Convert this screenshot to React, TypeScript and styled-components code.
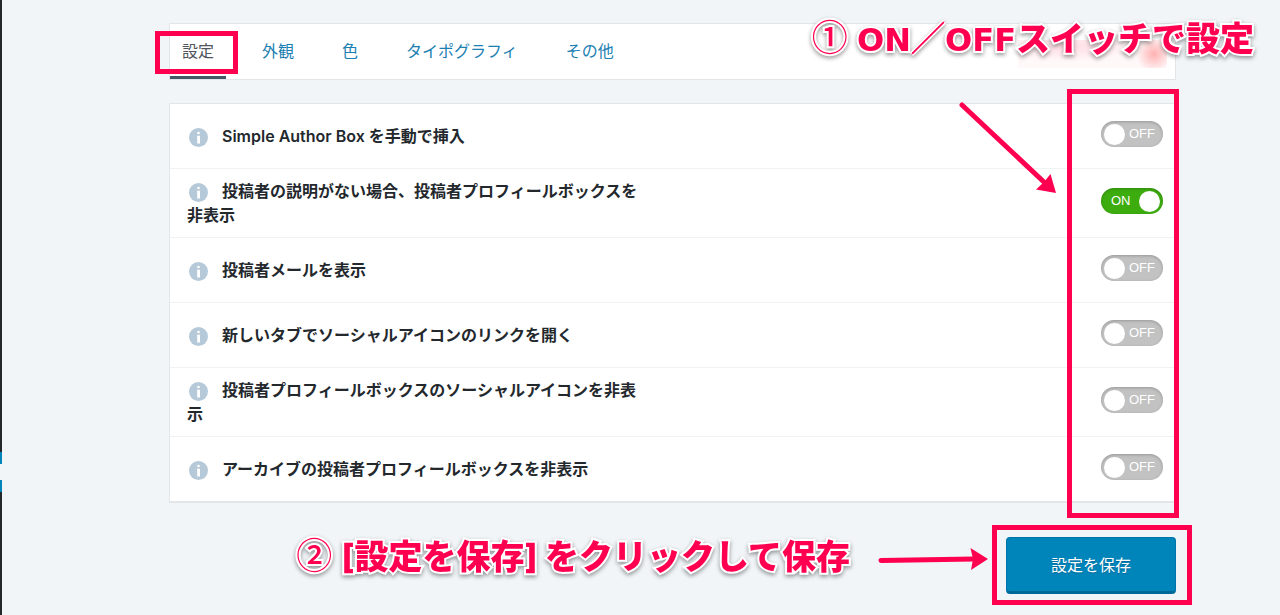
import React, { useState } from "react";
import styled, { createGlobalStyle } from "styled-components";

const PINK = "#ff0050";

const GlobalStyle = createGlobalStyle`
  *, *::before, *::after { box-sizing: border-box; }
  html, body, #root { min-height: 100vh; }
  body {
    margin: 0;
    background: #f1f5f8;
    color: #23282d;
    font: 16px/24px Inter, "Noto Sans CJK JP", sans-serif;
    overflow-x: hidden;
  }
`;

const Page = styled.div`
  display: flex;
  min-height: 100vh;
`;

const Sidebar = styled.aside`
  display: flex;
  flex-direction: column;
  width: 2px;
  background: #23282d;
`;

const SidebarActive = styled.div`
  height: 40px;
  margin-top: 452px;
  background: linear-gradient(#0085ba 12px, #f1f5f8 12px, #f1f5f8 28px, #0085ba 28px);
`;

const Main = styled.main`
  flex: 1;
  min-width: 0;
  padding: 23px 104px 10px 167px;
`;

const TabBar = styled.nav`
  position: relative;
  display: flex;
  gap: 24px;
  height: 57px;
  border: 1px solid #e3e6e8;
  background: #fff;
`;

const Tab = styled.a<{ $active?: boolean }>`
  position: relative;
  display: flex;
  align-items: center;
  padding: 2px 12px 0;
  border-bottom: 3px solid ${(p) => (p.$active ? "#415868" : "transparent")};
  color: ${(p) => (p.$active ? "#50565c" : "#1c80b2")};
  text-decoration: none;
  white-space: nowrap;
`;

const Smudge = styled.div`
  flex: none;
  align-self: center;
  width: 149px;
  height: 28px;
  margin: 4px 8px 0 auto;
  background:
    radial-gradient(circle at 136px 14px, rgba(255, 130, 130, 0.6), rgba(255, 130, 130, 0) 18px),
    radial-gradient(ellipse at 50px 6px, rgba(255, 170, 185, 0.4), rgba(255, 190, 200, 0.1) 70px);
`;

const Frame = styled.div<{ $inset: string }>`
  position: absolute;
  inset: ${(p) => p.$inset};
  border: 5px solid ${PINK};
  pointer-events: none;
`;

const SwitchFrame = styled(Frame)`
  width: 112px;
`;

const Note = styled.p`
  margin: 0;
  color: ${PINK};
  font-family: Inter, "Noto Sans CJK JP", sans-serif;
  font-size: 34px;
  line-height: 36px;
  font-weight: 800;
  white-space: nowrap;
  -webkit-text-stroke: 4px #fff;
  paint-order: stroke fill;
  filter: drop-shadow(0 2px 2px rgba(0, 0, 0, 0.4));
`;

const TopNote = styled(Note)`
  position: absolute;
  right: -79px;
  top: -3px;
`;

const Numeral = styled.span`
  margin-right: 2px;
  font-family: "Noto Sans CJK JP", sans-serif;
  font-size: 36px;
  font-weight: 500;
  line-height: 0;
`;

const Wide = styled.span`
  font-family: "DejaVu Sans", sans-serif;
  font-size: 32px;
  font-weight: 700;
  line-height: 0;
`;

const Slash = styled.span`
  -webkit-text-stroke: 2px ${PINK};
  text-shadow: 2px 0 #fff, -2px 0 #fff, 0 2px #fff, 0 -2px #fff;
`;

const Card = styled.section`
  position: relative;
  margin-top: 23px;
  border: 1px solid #e3e6e8;
  border-bottom-width: 2px;
  background: #fff;
`;

const Row = styled.div`
  display: flex;
  align-items: center;
  justify-content: space-between;
  min-height: 65px;
  padding: 10px 12px 10px 17px;
  border-top: 1px solid #f1f2f3;
  &:first-child {
    min-height: 64px;
    border-top: 0;
  }
`;

const RowLabel = styled.label`
  width: 47%;
  max-width: 462px;
  font-weight: 600;
  line-height: 24px;
`;

const InfoIcon = styled.svg`
  width: 19px;
  height: 19px;
  margin: 0 14px 0 2px;
  vertical-align: -5px;
`;

const Switch = styled.span<{ $on: boolean }>`
  position: relative;
  display: flex;
  flex-direction: ${(p) => (p.$on ? "row" : "row-reverse")};
  align-items: center;
  justify-content: space-between;
  width: 62px;
  height: 26px;
  margin-bottom: 4px;
  padding: ${(p) => (p.$on ? "0 3px 0 10px" : "0 8px 0 3px")};
  border-radius: 13px;
  background: ${(p) => (p.$on ? "#3dac0f" : "#c2c2c2")};
  box-shadow: inset 0 1px 3px rgba(0, 0, 0, 0.22);
  color: #fff;
  font: 13px/26px "Liberation Sans", Arial, sans-serif;
`;

const Knob = styled.span`
  width: 21px;
  height: 21px;
  border-radius: 50%;
  background: #fff;
`;

const SwitchInput = styled.input`
  position: absolute;
  inset: 0;
  width: 100%;
  height: 100%;
  margin: 0;
  opacity: 0;
  cursor: pointer;
`;

const Footer = styled.footer`
  display: flex;
  justify-content: flex-end;
  align-items: center;
  margin-top: 34px;
`;

const BottomNote = styled(Note)`
  margin: 0 28px 18px 0;
`;

const FlatArrow = styled.svg`
  flex: none;
  width: 110px;
  height: 24px;
  margin: 0 18px 13px 0;
`;

const DownArrow = styled.svg`
  position: absolute;
  right: 118px;
  top: -3px;
  width: 100px;
  height: 96px;
`;

const SaveArea = styled.div`
  position: relative;
`;

const SaveButton = styled.button`
  display: block;
  width: 170px;
  height: 57px;
  padding: 0 0 2px;
  border: 1px solid #0073aa;
  border-bottom: 3px solid #006799;
  border-radius: 4px;
  background: #0085ba;
  color: #fff;
  font: 16px/24px "Noto Sans CJK JP", sans-serif;
  text-shadow: 0 1px 1px #006799;
  cursor: pointer;
`;

const tabs = ["設定", "外観", "色", "タイポグラフィ", "その他"];

const options = [
  { id: "manual", label: "Simple Author Box を手動で挿入", on: false },
  { id: "no-description", label: "投稿者の説明がない場合、投稿者プロフィールボックスを非表示", on: true },
  { id: "email", label: "投稿者メールを表示", on: false },
  { id: "new-tab", label: "新しいタブでソーシャルアイコンのリンクを開く", on: false },
  { id: "hide-social", label: "投稿者プロフィールボックスのソーシャルアイコンを非表示", on: false },
  { id: "hide-archive", label: "アーカイブの投稿者プロフィールボックスを非表示", on: false },
];

function Option({ id, label, on }: { id: string; label: string; on: boolean }) {
  const [checked, setChecked] = useState(on);
  return (
    <Row>
      <RowLabel htmlFor={id}>
        <InfoIcon viewBox="0 0 19 19" aria-hidden="true">
          <circle cx="9.5" cy="9.5" r="9.5" fill="#b5c9d9" />
          <circle cx="9.5" cy="5" r="1.3" fill="#fff" />
          <path d="M8 7.800h3v7.600H8.200V9.200H8z" fill="#fff" />
        </InfoIcon>
        {label}
      </RowLabel>
      <Switch $on={checked}>
        <span>{checked ? "ON" : "OFF"}</span>
        <Knob />
        <SwitchInput
          id={id}
          type="checkbox"
          checked={checked}
          onChange={(e) => setChecked(e.target.checked)}
        />
      </Switch>
    </Row>
  );
}

export default function App() {
  return (
    <>
      <GlobalStyle />
      <Page>
        <Sidebar>
          <SidebarActive />
        </Sidebar>
        <Main>
          <TabBar>
            {tabs.map((name, i) => (
              <Tab key={name} href="#" $active={i === 0}>
                {name}
                {i === 0 && <Frame $inset="7px -12px 2px -15px" />}
              </Tab>
            ))}
            <Smudge />
            <TopNote>
              <Numeral>①</Numeral> <Wide>ON</Wide>
              <Slash>／</Slash>
              <Wide>OFF</Wide>スイッチで設定
            </TopNote>
          </TabBar>
          <Card>
            {options.map((o) => (
              <Option key={o.id} {...o} />
            ))}
            <SwitchFrame $inset="-15px -4px -17px auto" />
            <DownArrow viewBox="0 0 100 96" aria-hidden="true">
              <path d="M5 4L88 82" stroke={PINK} strokeWidth="5" strokeLinecap="round" />
              <path d="M99 92L93.500 73L87 81L79 88.500z" fill={PINK} />
            </DownArrow>
          </Card>
          <Footer>
            <BottomNote>
              <Numeral>②</Numeral> [設定を保存] をクリックして保存
            </BottomNote>
            <FlatArrow viewBox="0 0 110 24" aria-hidden="true">
              <path d="M3 13.500L96 12" stroke={PINK} strokeWidth="5" strokeLinecap="round" />
              <path d="M110 12L92.500 1L95 12L93 23z" fill={PINK} />
            </FlatArrow>
            <SaveArea>
              <SaveButton type="button">設定を保存</SaveButton>
              <Frame $inset="-12px -16px -11px -14px" />
            </SaveArea>
          </Footer>
        </Main>
      </Page>
    </>
  );
}
